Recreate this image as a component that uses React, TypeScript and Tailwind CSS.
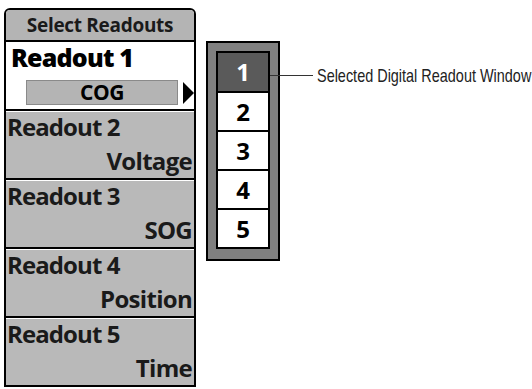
import React from "react";

const menuFont = { fontFamily: '"Open Sans", "Noto Sans", sans-serif' };

const readouts = [
  { label: "Readout 2", value: "Voltage" },
  { label: "Readout 3", value: "SOG" },
  { label: "Readout 4", value: "Position" },
  { label: "Readout 5", value: "Time" },
];

export default function App() {
  return (
    <div className="w-[532px] h-[389px] bg-white relative overflow-hidden" style={menuFont}>
      <div className="flex items-start pt-[8px] pl-[4px]">
        {/* Select Readouts menu */}
        <div className="w-[192px] border-2 border-black rounded-t-[6px] overflow-hidden bg-white">
          <div className="h-[30px] bg-[#b4b4b4] flex items-center justify-center text-[19px] font-bold text-[#1a1a1a] tracking-[-0.3px]">
            Select Readouts
          </div>

          <div className="h-[69px] border-t-2 border-black bg-white flex flex-col">
            <div className="pl-[5px] text-[25px] font-extrabold leading-[30px] text-black tracking-[-0.8px]">
              Readout 1
            </div>
            <div className="flex items-center mt-[8px] pl-[20px]">
              <div className="w-[152px] h-[25px] bg-[#b4b4b4] border border-[#8a8a8a] flex items-center justify-center text-[21px] font-bold text-black leading-none tracking-[-0.5px]">
                COG
              </div>
              <svg width="11" height="22" viewBox="0 0 11 22" className="ml-[5px]">
                <path d="M0 0 L11 11 L0 22 Z" fill="#000" />
              </svg>
            </div>
          </div>

          {readouts.map((r) => (
            <div key={r.label} className="h-[69px] border-t-2 border-black bg-[#b9b9b9] shadow-[inset_0_1px_0_#ffffff] flex flex-col">
              <div className="pl-[1px] pt-[1px] text-[24px] font-bold leading-[30px] text-[#1a1a1a] tracking-[-0.9px]">
                {r.label}
              </div>
              <div className="pr-[2px] pt-[4px] text-right text-[24px] font-bold leading-[30px] text-[#1a1a1a] tracking-[-0.7px]">
                {r.value}
              </div>
            </div>
          ))}
        </div>

        {/* Digital readout window selector */}
        <div className="ml-[10px] mt-[33px] w-[74px] bg-[#808080] border-2 border-black p-[8px] pb-[10px]">
          <div className="border-2 border-black bg-white flex flex-col">
            {[1, 2, 3, 4, 5].map((n) => (
              <div
                key={n}
                className={
                  n === 1
                    ? "h-[38px] bg-[#5a5a5a] text-white flex items-center justify-center text-[24px] font-bold"
                    : "h-[39px] border-t-2 border-black bg-white text-black flex items-center justify-center text-[24px] font-bold"
                }
              >
                {n}
              </div>
            ))}
          </div>
        </div>
      </div>

      {/* callout */}
      <div className="absolute left-[270px] top-[66px] flex items-center">
        <div className="w-[43px] h-px bg-[#333]" />
        <span
          className="ml-[4px] text-[19px] text-[#222] leading-none whitespace-nowrap inline-block origin-left scale-x-[0.76]"
          style={{ fontFamily: '"Liberation Sans", Arial, sans-serif' }}
        >
          Selected Digital Readout Window
        </span>
      </div>
    </div>
  );
}
